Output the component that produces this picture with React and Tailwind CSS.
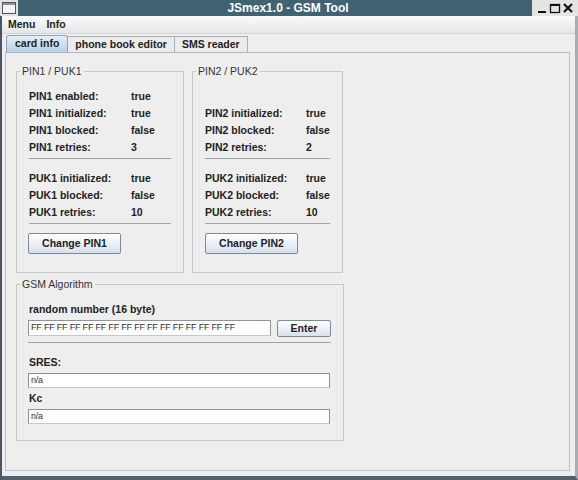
import React from "react";

const sans = "font-['Liberation_Sans',Arial,sans-serif]";

const Row = ({ label, value, w = "w-[102px]" }) => (
  <div className="flex h-[17px] items-center font-bold text-[10.5px] text-[#222]">
    <span className={w}>{label}</span>
    <span>{value}</span>
  </div>
);

const Sep = ({ className = "" }) => (
  <div className={`h-px bg-[#a0a4a8] ${className}`} />
);

const Button = ({ children, className = "" }) => (
  <button
    className={`flex items-center justify-center border border-[#7a8a99] rounded-[2px] bg-linear-to-b from-white to-[#d6e1ec] text-[10.5px] font-bold text-[#222] ${className}`}
  >
    {children}
  </button>
);

const Group = ({ title, className = "", children }) => (
  <fieldset className={`border border-[#c6c9cc] ${className}`}>
    <legend className="ml-[3px] px-[2px] text-[10.5px] leading-[12px] text-[#333]">
      {title}
    </legend>
    {children}
  </fieldset>
);

const Field = ({ value, className = "" }) => (
  <div
    className={`flex items-center border border-[#8c949c] border-b-[#c4c8cc] bg-white px-[2px] text-[9px] tracking-[-0.2px] text-[#333] ${className}`}
  >
    {value}
  </div>
);

const WindowControls = () => (
  <svg width="40" height="14" viewBox="0 0 40 14">
    <rect x="3" y="10" width="8" height="2" fill="#111" />
    <rect x="15.5" y="3.5" width="9" height="8" fill="none" stroke="#111" strokeWidth="1.3" />
    <rect x="15.5" y="3" width="9" height="2" fill="#111" />
    <path d="M29 3 L37 11 M37 3 L29 11" stroke="#111" strokeWidth="2.2" />
  </svg>
);

const AppIcon = () => (
  <svg width="14" height="12" viewBox="0 0 14 12">
    <rect x="0.5" y="0.5" width="13" height="11" fill="#f4f4f4" stroke="#555" />
    <rect x="1" y="1" width="12" height="2" fill="#7d97a6" />
  </svg>
);

export default function App() {
  const pin1 = [
    ["PIN1 enabled:", "true"],
    ["PIN1 initialized:", "true"],
    ["PIN1 blocked:", "false"],
    ["PIN1 retries:", "3"],
  ];
  const puk1 = [
    ["PUK1 initialized:", "true"],
    ["PUK1 blocked:", "false"],
    ["PUK1 retries:", "10"],
  ];
  const pin2 = [
    ["PIN2 initialized:", "true"],
    ["PIN2 blocked:", "false"],
    ["PIN2 retries:", "2"],
  ];
  const puk2 = [
    ["PUK2 initialized:", "true"],
    ["PUK2 blocked:", "false"],
    ["PUK2 retries:", "10"],
  ];

  return (
    <div className={`w-[578px] h-[480px] flex flex-col bg-[#eeeeee] overflow-hidden ${sans}`}>
      {/* title bar */}
      <div className="flex h-[16px] shrink-0">
        <div className="w-[18px] flex items-center justify-center bg-[#e4e4e4]">
          <AppIcon />
        </div>
        <div className="flex-1 flex items-center justify-center pl-[26px] bg-[#3f6372] text-white font-bold text-[12px] leading-none">
          JSmex1.0 - GSM Tool
        </div>
        <div className="w-[46px] flex items-center justify-center bg-[#e4e4e4]">
          <WindowControls />
        </div>
      </div>

      {/* window body */}
      <div className="flex-1 flex flex-col border-l-2 border-l-[#4a5566] border-r-[3px] border-r-[#a9adb1] border-b-[4px] border-b-[#55606c]">
        {/* menu bar */}
        <div className="h-[18px] shrink-0 flex items-center gap-[11px] pl-[6px] bg-linear-to-b from-[#fbfbfb] to-[#e6e6e6] border-b border-[#d4d4d4] text-[10.5px] font-bold text-[#222]">
          <span>Menu</span>
          <span>Info</span>
        </div>

        <div className="flex-1 flex flex-col px-[3px] pt-[1px] pb-[5px]">
          {/* tabs */}
          <div className="flex h-[17px] items-end pl-[1px] text-[10.5px] font-bold text-[#222]">
            <div className="h-[17px] flex items-center px-[8px] rounded-t-[3px] border border-b-0 border-[#8ea4ba] bg-linear-to-b from-[#e6eef6] to-[#b9cfe4]">
              card info
            </div>
            <div className="h-[16px] flex items-center px-[7px] border border-b-0 border-l-0 border-[#a9b2bb] bg-[#ececec]">
              phone book editor
            </div>
            <div className="h-[16px] flex items-center px-[7px] border border-b-0 border-l-0 border-[#a9b2bb] bg-[#ececec]">
              SMS reader
            </div>
          </div>

          {/* tab panel */}
          <div className="flex-1 border border-[#b8c4d0] border-t-[#a8bacb] mr-[2px] pl-[10px] pt-[12px]">
            <div className="flex gap-[8px]">
              <Group title="PIN1 / PUK1" className="w-[168px]">
                <div className="px-[12px] pt-[11px] pb-[18px]">
                  {pin1.map(([l, v]) => (
                    <Row key={l} label={l} value={v} />
                  ))}
                  <Sep className="mt-[2px] mb-[11px]" />
                  {puk1.map(([l, v]) => (
                    <Row key={l} label={l} value={v} />
                  ))}
                  <Sep className="mt-[2px]" />
                  <Button className="mt-[9px] w-[93px] h-[21px] -ml-[1px]">Change PIN1</Button>
                </div>
              </Group>
              <Group title="PIN2 / PUK2" className="w-[151px]">
                <div className="px-[12px] pt-[11px] pb-[18px]">
                  <div className="h-[17px]" />
                  {pin2.map(([l, v]) => (
                    <Row key={l} label={l} value={v} w="w-[101px]" />
                  ))}
                  <Sep className="mt-[2px] mb-[11px]" />
                  {puk2.map(([l, v]) => (
                    <Row key={l} label={l} value={v} w="w-[101px]" />
                  ))}
                  <Sep className="mt-[2px]" />
                  <Button className="mt-[9px] w-[93px] h-[21px]">Change PIN2</Button>
                </div>
              </Group>
            </div>

            <Group title="GSM Algorithm" className="w-[327px] mt-[5px]">
              <div className="px-[12px] pt-[11px] pb-[16px]">
                <div className="h-[17px] flex items-center font-bold text-[10.5px] text-[#222]">
                  random number (16 byte)
                </div>
                <div className="flex gap-[6px] mt-[2px] items-start -ml-[1px]">
                  <Field
                    value="FF FF FF FF FF FF FF FF FF FF FF FF FF FF FF FF"
                    className="w-[243px] h-[16px]"
                  />
                  <Button className="w-[54px] h-[17px]">Enter</Button>
                </div>
                <Sep className="mt-[5px] -ml-[1px]" />
                <div className="h-[17px] mt-[11px] flex items-center font-bold text-[10.5px] text-[#222]">
                  SRES:
                </div>
                <Field value="n/a" className="mt-[2px] h-[15px] -ml-[1px] mr-[1px]" />
                <div className="h-[17px] mt-[2px] flex items-center font-bold text-[10.5px] text-[#222]">
                  Kc
                </div>
                <Field value="n/a" className="mt-[2px] h-[15px] -ml-[1px] mr-[1px]" />
              </div>
            </Group>
          </div>
        </div>
      </div>
    </div>
  );
}
